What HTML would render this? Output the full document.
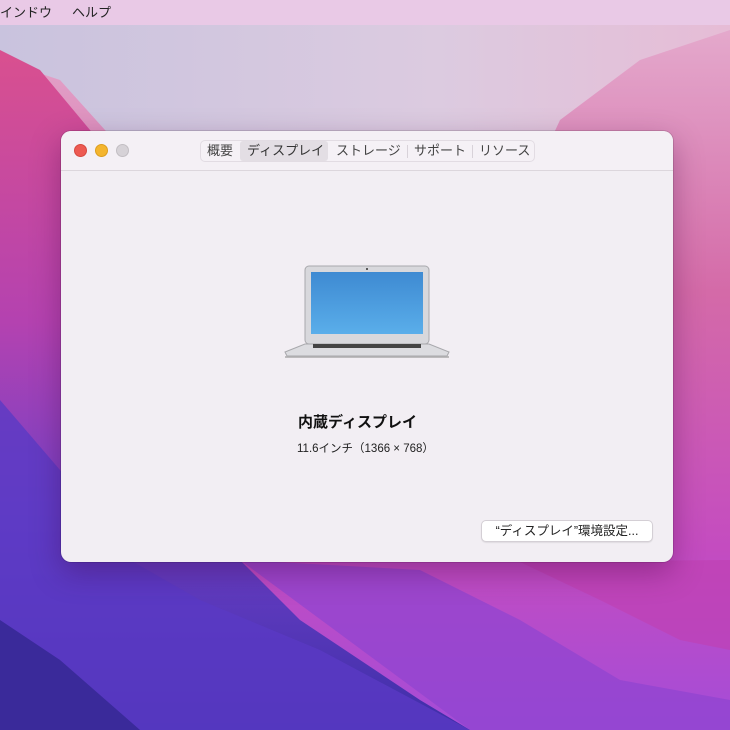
<!DOCTYPE html>
<html><head><meta charset="utf-8"><style>
*{margin:0;padding:0;box-sizing:border-box}
body{width:730px;height:730px;overflow:hidden;position:relative;font-family:"Liberation Sans","Noto Sans CJK JP",sans-serif;background:#c060b0}
#bg{position:absolute;left:0;top:0}
.menu{position:absolute;left:0;top:0;width:730px;height:25px;background:#e9c9e6;font-size:13px;color:#222}
.menu span{position:absolute;top:2px}
.win{position:absolute;left:61px;top:131px;width:612px;height:431px;background:#f2eef3;border-radius:10px;box-shadow:0 10px 30px rgba(60,0,60,.35),0 0 0 1px rgba(0,0,0,.12);overflow:hidden}
.tb{height:40px;border-bottom:1px solid #dcd6dc;background:#f4f0f5}
.dot{position:absolute;top:13px;width:13px;height:13px;border-radius:50%}
.seg{position:absolute;left:139px;top:9px;width:335px;height:22px;border:1px solid #e2dce3;border-radius:5px;background:#f5f1f6;font-size:13px;color:#444}
.seg span{position:absolute;top:-1px}
.sel{position:absolute;left:39px;top:0;width:88px;height:20px;background:#e3dee4;border-radius:3px}
.sep{position:absolute;top:4px;width:1px;height:13px;background:#d8d2d9}
</style></head><body>
<svg id="bg" width="730" height="730" viewBox="0 0 730 730">
<defs>
<linearGradient id="t" x1="0" y1="0" x2="1" y2="0"><stop offset="0" stop-color="#c9c3de"/><stop offset=".6" stop-color="#dccbe0"/><stop offset="1" stop-color="#e6bcd6"/></linearGradient>
<linearGradient id="l" x1="0" y1="0" x2="0" y2="1"><stop offset="0" stop-color="#d9508f"/><stop offset=".4" stop-color="#b442b0"/><stop offset=".7" stop-color="#6e40c8"/><stop offset="1" stop-color="#3e2ea8"/></linearGradient>
<linearGradient id="r" x1="0" y1="0" x2="0" y2="1"><stop offset="0" stop-color="#e6b0d0"/><stop offset=".4" stop-color="#d46aa8"/><stop offset=".75" stop-color="#c44cc0"/><stop offset="1" stop-color="#a44cd8"/></linearGradient>
</defs>
<rect width="730" height="730" fill="url(#r)"/>
<path d="M0 25H730V30L640 60 560 120 500 250 300 250 150 180 60 80 0 60Z" fill="url(#t)"/>
<path d="M0 50 40 70 90 130 140 200 200 300 230 420 240 560 300 620 420 700 470 730H0Z" fill="url(#l)"/>
<path d="M0 400 60 470 130 560 200 600 320 650 470 730H0Z" fill="#5a3ac4" opacity=".8"/>
<path d="M0 620 60 660 140 730H0Z" fill="#3a2a9a"/>
<path d="M240 560 420 570 520 620 620 680 730 700V730H470Z" fill="#8e44d0" opacity=".7"/>
<path d="M520 562 600 600 680 640 730 650V560Z" fill="#c040b0" opacity=".6"/>
</svg>
<div class="menu"><span style="left:0">インドウ</span><span style="left:72px">ヘルプ</span></div>
<div class="win">
 <div class="tb"></div>
 <div class="dot" style="left:13px;background:#ed5a52;border:1px solid #d64840"></div>
 <div class="dot" style="left:34px;background:#f4b52e;border:1px solid #dc9e1e"></div>
 <div class="dot" style="left:55px;background:#d6d2d7;border:1px solid #c2bec3"></div>
 <div class="seg">
  <div class="sel"></div>
  <span style="left:6px">概要</span>
  <span style="left:46px;color:#333">ディスプレイ</span>
  <span style="left:135px">ストレージ</span>
  <div class="sep" style="left:206px"></div>
  <span style="left:213px">サポート</span>
  <div class="sep" style="left:271px"></div>
  <span style="left:278px">リソース</span>
 </div>
 <svg style="position:absolute;left:222px;top:133px" width="168" height="96" viewBox="0 0 168 96">
  <defs><linearGradient id="s" x1="0" y1="0" x2="0" y2="1"><stop offset="0" stop-color="#3e8ad2"/><stop offset="1" stop-color="#5aaeea"/></linearGradient></defs>
  <rect x="22" y="2" width="124" height="78" rx="4" fill="#d8d8dc" stroke="#a8a8ac"/>
  <rect x="28" y="8" width="112" height="62" fill="url(#s)"/>
  <circle cx="84" cy="5" r="1" fill="#333"/>
  <path d="M2 88 L22 80 L146 80 L166 88 L164 92 L4 92Z" fill="#dcdce0" stroke="#a8a8ac"/>
  <rect x="30" y="80" width="108" height="4" fill="#444"/>
  <rect x="2" y="92" width="164" height="2" fill="#999" opacity=".6"/>
 </svg>
 <div style="position:absolute;left:237px;top:280px;font-size:15px;font-weight:bold;color:#111">内蔵ディスプレイ</div>
 <div style="position:absolute;left:236px;top:309px;font-size:11.5px;color:#222">11.6インチ（1366 × 768）</div>
 <div style="position:absolute;left:420px;top:389px;width:172px;height:22px;background:#fff;border:1px solid #d4cfd5;border-radius:5px;font-size:12.5px;color:#222;text-align:center;line-height:20px;box-shadow:0 1px 1px rgba(0,0,0,.08)">“ディスプレイ”環境設定...</div>
</div>
</body></html>
